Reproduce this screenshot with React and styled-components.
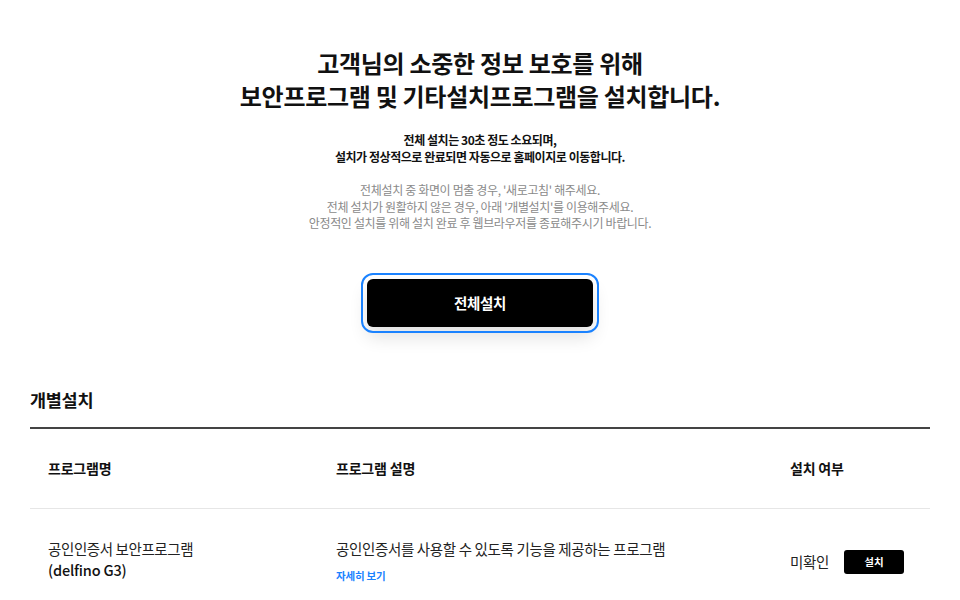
import React from 'react';
import styled, { createGlobalStyle } from 'styled-components';

const GlobalStyle = createGlobalStyle`
    body {
        margin: 0;
        background: #fff;
        font-family: "Noto Sans CJK KR", "Noto Sans", sans-serif;
        color: #111;
    }
`;

const Page = styled.div`
    width: 960px;
    padding: 46px 30px 0 30px;
    box-sizing: border-box;
`;

const Intro = styled.section`
    display: flex;
    flex-direction: column;
    align-items: center;
    text-align: center;
`;

const Title = styled.h1`
    margin: 0;
    font-size: 24px;
    font-weight: 700;
    line-height: 33px;
    letter-spacing: -0.3px;
    color: #111;
`;

const Lead = styled.p`
    margin: 19px 0 0 0;
    font-size: 12px;
    font-weight: 700;
    line-height: 17px;
    letter-spacing: -0.45px;
    color: #111;
`;

const Note = styled.p`
    margin: 17px 0 0 0;
    font-size: 12px;
    font-weight: 400;
    line-height: 16.5px;
    letter-spacing: -0.35px;
    color: #8a8a8a;
`;

const AllButton = styled.button`
    margin-top: 47px;
    width: 226px;
    height: 48px;
    border: none;
    border-radius: 6px;
    background: #000;
    color: #fff;
    font-family: inherit;
    font-size: 14.5px;
    font-weight: 700;
    letter-spacing: -0.3px;
    outline: 2px solid #1a82ff;
    outline-offset: 4px;
    box-shadow: 0 10px 18px rgba(0, 0, 0, 0.12);
    cursor: pointer;
`;

const SectionTitle = styled.h2`
    margin: 61px 0 0 0;
    font-size: 17.5px;
    font-weight: 700;
    line-height: 24px;
    letter-spacing: -0.3px;
    color: #111;
    padding-bottom: 15px;
    border-bottom: 2px solid #444;
`;

const Row = styled.div`
    display: grid;
    grid-template-columns: 288px 454px 1fr;
    align-items: ${p => (p.head ? 'center' : 'start')};
    height: ${p => (p.head ? '79px' : 'auto')};
    padding: ${p => (p.head ? '0' : '29px 0')};
    border-bottom: ${p => (p.head ? '1px solid #e6e6e6' : 'none')};
`;

const HeadCell = styled.div`
    padding-left: 18px;
    font-size: 14px;
    font-weight: 700;
    letter-spacing: -0.2px;
    color: #111;
`;

const Cell = styled.div`
    padding-left: 18px;
    font-size: 14.5px;
    line-height: 21px;
    letter-spacing: -0.35px;
    color: #222;
    align-self: ${p => p.center ? 'center' : 'start'};
`;

const ProgName = styled.div`
    font-size: 14.5px;
    line-height: 21px;
    letter-spacing: -0.4px;
    color: #222;
    & b {
        font-weight: 500;
        color: #111;
        letter-spacing: -0.2px;
    }
`;

const MoreLink = styled.a`
    display: block;
    margin-top: 6px;
    font-size: 10.5px;
    font-weight: 700;
    letter-spacing: -0.2px;
    color: #1a82ff;
    text-decoration: none;
`;

const Status = styled.div`
    display: flex;
    align-items: center;
    gap: 15px;
    font-size: 14.5px;
    color: #222;
`;

const SmallButton = styled.button`
    width: 60px;
    height: 24px;
    border: none;
    border-radius: 3px;
    background: #000;
    color: #fff;
    font-family: inherit;
    font-size: 10.5px;
    font-weight: 700;
    cursor: pointer;
`;

function App() {
    return (
        <>
            <GlobalStyle />
            <Page>
                <Intro>
                    <Title>고객님의 소중한 정보 보호를 위해<br />보안프로그램 및 기타설치프로그램을 설치합니다.</Title>
                    <Lead>전체 설치는 30초 정도 소요되며,<br />설치가 정상적으로 완료되면 자동으로 홈페이지로 이동합니다.</Lead>
                    <Note>
                        전체설치 중 화면이 멈출 경우, '새로고침' 해주세요.<br />
                        전체 설치가 원활하지 않은 경우, 아래 '개별설치'를 이용해주세요.<br />
                        안정적인 설치를 위해 설치 완료 후 웹브라우저를 종료해주시기 바랍니다.
                    </Note>
                    <AllButton>전체설치</AllButton>
                </Intro>

                <SectionTitle>개별설치</SectionTitle>
                <Row head>
                    <HeadCell>프로그램명</HeadCell>
                    <HeadCell>프로그램 설명</HeadCell>
                    <HeadCell>설치 여부</HeadCell>
                </Row>
                <Row>
                    <Cell>
                        <ProgName>공인인증서 보안프로그램<br /><b>(delfino G3)</b></ProgName>
                    </Cell>
                    <Cell>
                        공인인증서를 사용할 수 있도록 기능을 제공하는 프로그램
                        <MoreLink href="#">자세히 보기</MoreLink>
                    </Cell>
                    <Cell center>
                        <Status>
                            미확인
                            <SmallButton>설치</SmallButton>
                        </Status>
                    </Cell>
                </Row>
            </Page>
        </>
    );
}

export default App;
